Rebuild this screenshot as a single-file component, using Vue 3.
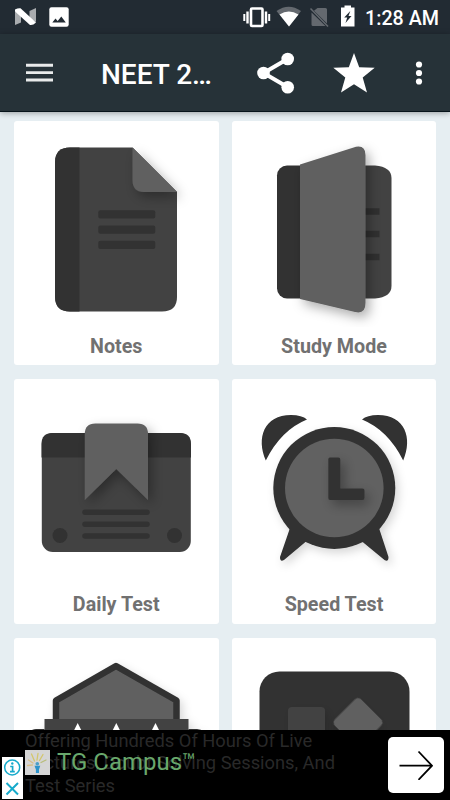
<script setup>
const tiles = [
  { id: 'notes', label: 'Notes', viewBox: '14 121 204 206' },
  { id: 'study', label: 'Study Mode', viewBox: '232 121 204 206' },
  { id: 'daily', label: 'Daily Test', viewBox: '14 379 204 206' },
  { id: 'speed', label: 'Speed Test', viewBox: '232 379 204 206' },
  { id: 'college', label: '', viewBox: '14 638 204 206' },
  { id: 'apps', label: '', viewBox: '232 638 204 206' }
]
</script>

<template>
  <div class="screen">
    <div class="status-bar">
      <div class="status-left">
        <svg class="icon-n" width="22" height="18" viewBox="0 0 22 18">
          <path d="M0 3.5L6 6v8.500L0 17z" fill="#a9acaf" />
          <path d="M21 0v14l-6.500-3V3z" fill="#a9acaf" />
          <path d="M0 1.500Q3 0 5.500 0.300L21 14.500Q18 17.500 15 17L0 3.500z" fill="#fff" />
        </svg>
        <svg class="icon-photo" width="20" height="20" viewBox="0 0 20 20">
          <rect x="0.300" y="0.300" width="19.400" height="19.400" rx="2.200" fill="#fff" />
          <path d="M3.300 15.500L6.500 11.500L8.700 14L12.300 9.500L16.800 15.500z" fill="#222b33" />
        </svg>
      </div>
      <div class="status-right">
        <svg width="174" height="34" viewBox="240 0 174 34" class="status-icons">
          <rect x="251" y="8.500" width="11.500" height="17.500" rx="1" fill="none" stroke="#fff" stroke-width="2.600" />
          <path d="M247.500 11.500v12M266 11.500v12" stroke="#fff" stroke-width="2.400" />
          <path d="M244.300 14v7M269.200 14v7" stroke="#fff" stroke-width="2" />
          <path d="M276.500 11Q288.800 2.500 301 11L289 26.500z" fill="#64696f" />
          <path d="M279.500 14.500Q288.800 8.500 298.500 14.500L289 26.500z" fill="#fff" />
          <path d="M317.500 8H325.500Q327 8 327 9.500V23.500L314 10.700zM311.500 12.500L325.500 26H313Q311.500 26 311.500 24.500z" fill="#64696f" />
          <path d="M310.500 8.500L328 26.500" stroke="#64696f" stroke-width="1.500" />
          <path d="M341 7.500H344.500V5.500H351V7.500H354.500V26.500H341z" fill="#fff" />
          <path d="M350.300 11L344.200 17.500H347.200L345.500 23L351.500 16H348.500z" fill="#222b33" />
        </svg>
        <span class="clock">1:28 AM</span>
      </div>
    </div>

    <header class="toolbar">
      <button class="tool menu" aria-label="Menu">
        <svg width="27" height="20" viewBox="0 0 27 20">
          <path d="M0 2.200h27M0 9.600h27M0 17h27" stroke="#e9ebeb" stroke-width="2.900" />
        </svg>
      </button>
      <h1 class="title">NEET 2…</h1>
      <button class="tool share" aria-label="Share">
        <svg width="38" height="42" viewBox="257 52 38 42">
          <path d="M287.500 59L263.500 73L287.500 87" fill="none" stroke="#fff" stroke-width="4" />
          <circle cx="287.700" cy="59" r="6.300" fill="#fff" />
          <circle cx="263.500" cy="73" r="6.300" fill="#fff" />
          <circle cx="287.700" cy="87.200" r="6.300" fill="#fff" />
        </svg>
      </button>
      <button class="tool star" aria-label="Favourite">
        <svg width="42" height="40" viewBox="333 52 42 40">
          <path d="M354 52L359.200 66.200L374.700 66.700L362.700 76.500L367 91.500L354 83.300L341 91.500L345.300 76.500L333.300 66.700L348.800 66.200z" fill="#fff" />
        </svg>
      </button>
      <button class="tool more" aria-label="More">
        <svg width="8" height="26" viewBox="0 0 8 26">
          <circle v-for="y in [4.5, 13, 21.5]" :key="y" cx="4" :cy="y" r="3.100" fill="#fff" />
        </svg>
      </button>
    </header>

    <main class="grid">
      <section v-for="tile in tiles" :key="tile.id" class="card">
        <svg class="art" :viewBox="tile.viewBox">
          <defs>
            <filter :id="'shadow-' + tile.id" x="-80%" y="-80%" width="260%" height="260%">
              <feDropShadow dx="4" dy="5" stdDeviation="6" flood-color="#000" flood-opacity="0.32" />
            </filter>
            <filter :id="'soft-' + tile.id" x="-30%" y="-30%" width="170%" height="170%">
              <feDropShadow dx="3" dy="4" stdDeviation="5" flood-color="#000" flood-opacity="0.16" />
            </filter>
          </defs>

          <g v-if="tile.id === 'notes'">
            <clipPath id="page">
              <path d="M70 147.500H132.500L177 192V297Q177 311.500 162 311.500H70Q55 311.500 55 296.500V162.500Q55 147.500 70 147.500z" />
            </clipPath>
            <path d="M132.500 147.500L177 192H144Q132.500 192 132.500 180z" fill="#616161" filter="url(#shadow-notes)" />
            <g clip-path="url(#page)">
              <rect x="55" y="147" width="123" height="165" fill="#424242" />
              <rect x="55" y="147" width="24.500" height="165" fill="#323232" />
              <path d="M132.500 147.500L177 192H144Q132.500 192 132.500 180z" fill="#616161" filter="url(#shadow-notes)" />
            </g>
            <rect v-for="y in [210.3, 225.5, 240.7]" :key="y" x="98.300" :y="y" width="57" height="8.300" rx="2" fill="#323232" />
          </g>

          <g v-else-if="tile.id === 'study'">
            <rect x="277" y="165.500" width="40" height="133" rx="10" fill="#323232" />
            <path d="M300 165.500H375Q391.500 167 391.500 178V286Q391.500 297 375 298.500H300z" fill="#424242" />
            <path v-for="y in [211.5, 234, 257]" :key="y" :d="`M340 ${y}H379.500`" stroke="#303030" stroke-width="6.500" />
            <path d="M300 164.500L356 146.700Q365.500 145 365.500 155V303Q365.500 314.500 355 312L300 299z" fill="#616161" filter="url(#shadow-study)" />
          </g>

          <g v-else-if="tile.id === 'daily'">
            <rect x="41.800" y="433" width="149" height="119" rx="11" fill="#424242" />
            <path d="M41.500 457.500V444Q41.500 433 52.500 433H180Q191 433 191 444V457.500z" fill="#323232" />
            <path d="M84.800 500V434Q84.800 423.500 95.300 423.500H137.500Q148 423.500 148 434V500L116.300 469z" fill="#616161" filter="url(#shadow-daily)" />
            <path v-for="y in [512.3, 524.3, 536]" :key="y" :d="`M85 ${y}H147`" stroke="#323232" stroke-width="5.500" stroke-linecap="round" />
            <circle cx="60" cy="535.500" r="7.500" fill="#323232" />
            <circle cx="174.500" cy="535.500" r="7.500" fill="#323232" />
          </g>

          <g v-else-if="tile.id === 'speed'">
            <g fill="#323232">
              <path d="M265.800 460.500C256 438 264 415 291 415Q302 415 307 419.500Q281 430 265.800 460.500z" />
              <path d="M403.200 460.500C413 438 405 415 378 415Q367 415 362 419.500Q388 430 403.200 460.500z" />
              <g filter="url(#soft-speed)">
                <circle cx="334.300" cy="488" r="61" />
                <path d="M290 528L280 557Q280 562.500 284 560L309 539zM379 528L388.500 557Q388.500 562.500 384.500 560L359 539z" />
              </g>
            </g>
            <circle cx="334.300" cy="488" r="49.300" fill="#616161" />
            <path d="M330 457.500H338.500Q340.300 457.500 340.300 459.500V488.500H362.500Q364.500 488.500 364.500 490.500V498Q364.500 500 362.500 500H330Q328.300 500 328.300 498V459.500Q328.300 457.500 330 457.500z" fill="#323232" filter="url(#shadow-speed)" />
          </g>

          <g v-else-if="tile.id === 'college'">
            <g filter="url(#soft-college)">
              <path d="M56 725V700.500L116 666L176.500 700.500V725z" fill="#616161" stroke="#323232" stroke-width="6.500" stroke-linejoin="round" />
              <path d="M44.500 719H188.500V745H44.500z" fill="#424242" />
              <path d="M30 732Q32 729 36 729H44.500V732zM188.500 729H197Q201 729 204 732H188.500z" fill="#323232" />
            </g>
            <path v-for="x in [77.7, 116.3, 155.5]" :key="x" :d="`M${x} 723L${x + 4} 731H${x - 4}z`" fill="#fff" />
          </g>

          <g v-else>
            <rect x="259.500" y="671.500" width="150" height="150" rx="20" fill="#323232" />
            <rect x="288" y="707" width="37" height="37" rx="4" fill="#424242" filter="url(#soft-apps)" />
            <rect x="339.500" y="704" width="37" height="37" rx="4.500" transform="rotate(45 358 722.500)" fill="#616161" filter="url(#soft-apps)" />
          </g>
        </svg>
        <div class="label">{{ tile.label }}</div>
      </section>
    </main>

    <footer class="ad">
      <p class="ad-text">
        Offering Hundreds Of Hours Of Live<br />
        Lectures, Doubt Solving Sessions, And<br />
        Test Series
      </p>
      <div class="ad-brand">
        <svg width="25" height="25" viewBox="0 0 25 25">
          <rect width="25" height="25" fill="#d5d5d5" />
          <g fill="none" stroke-width="1.300" stroke-linecap="round">
            <path d="M9.500 11L6.500 4M12 10L13 3.500M14.500 10.500L18 4.500" stroke="#d3c66c" />
            <path d="M8 13L3.500 10M7.500 15L2.500 15.500" stroke="#d8bd85" />
            <path d="M16 12.500L21 10" stroke="#b9bd79" />
          </g>
          <circle cx="12.300" cy="13.700" r="1.800" fill="#4b9fc8" />
          <path d="M9.500 15.800H15.300L14 19.500V23H10.900V19.500z" fill="#2d93cb" />
        </svg>
        <span class="brand-name">TG Campus<span class="tm">™</span></span>
      </div>
      <div class="ad-choices">
        <svg width="21" height="42" viewBox="0 0 21 42">
          <circle cx="10.200" cy="10.500" r="7.500" fill="none" stroke="#16aacb" stroke-width="1.500" />
          <path d="M8.200 9.500H10.600V14.700M8 14.700H12.800" fill="none" stroke="#16aacb" stroke-width="1.700" />
          <circle cx="10.300" cy="6.500" r="1.200" fill="#16aacb" />
          <path d="M4.500 26L16 37.500M16 26L4.500 37.500" stroke="#16aacb" stroke-width="2" />
        </svg>
      </div>
      <button class="ad-go" aria-label="Open">
        <svg width="34" height="30" viewBox="397 749 34 30">
          <path d="M397.500 764.700H430M416.500 750.500L430 764.700L416.500 778.800" fill="none" stroke="#000" stroke-width="1.800" />
        </svg>
      </button>
    </footer>
  </div>
</template>

<style>
body {
  margin: 0;
}
</style>

<style scoped>
.screen {
  position: relative;
  width: 450px;
  height: 800px;
  overflow: hidden;
  display: flex;
  flex-direction: column;
  background: #e6eef2;
  font-family: Roboto, sans-serif;
}
.status-bar {
  flex: none;
  display: flex;
  justify-content: space-between;
  height: 34px;
  background: #222b33;
}
.status-left {
  display: flex;
  gap: 12px;
  padding: 7px 0 0 15px;
}
.icon-n {
  margin-top: 1px;
}
.status-right {
  display: flex;
  width: 210px;
}
.status-icons {
  flex: none;
  width: 174px;
  margin-right: -49px;
}
.clock {
  color: #fff;
  font-size: 19.700px;
  line-height: 37px;
  font-weight: 500;
  white-space: nowrap;
}
.toolbar {
  position: relative;
  flex: none;
  display: flex;
  align-items: center;
  box-sizing: border-box;
  height: 78px;
  background: #263238;
  border-bottom: 1px solid #07141b;
  box-shadow: 0 1px 6px rgba(0, 0, 0, 0.35);
}
.tool {
  display: flex;
  padding: 0;
  border: none;
  background: none;
  cursor: pointer;
}
.menu {
  margin-left: 26px;
}
.title {
  width: 120px;
  margin: 3px 0 0 48px;
  color: #fff;
  font-size: 28px;
  font-weight: 500;
  white-space: nowrap;
}
.share {
  margin-left: 36px;
}
.star {
  margin-left: 38px;
}
.more {
  margin-left: 40px;
}
.grid {
  display: grid;
  grid-template-columns: 204.500px 204px;
  grid-template-rows: 244px 245px 245px;
  gap: 14px 13.500px;
  padding: 9px 14px 0;
}
.card {
  display: flex;
  flex-direction: column;
  background: #fff;
  border-radius: 3px;
  overflow: hidden;
}
.art {
  display: block;
  flex: none;
  width: 204px;
  height: 206px;
}
.label {
  margin-top: 6px;
  color: #717171;
  font-size: 19.700px;
  line-height: 27px;
  font-weight: 700;
  text-align: center;
}
.ad {
  position: absolute;
  left: 0;
  bottom: 0;
  width: 450px;
  height: 70px;
  background: #000;
}
.ad-text {
  margin: 0 0 0 25px;
  color: #292929;
  font-size: 18.300px;
  line-height: 22.400px;
  white-space: nowrap;
}
.ad-brand {
  position: absolute;
  left: 25px;
  top: 20px;
  display: flex;
  align-items: center;
  gap: 7px;
}
.brand-name {
  color: #69a86c;
  font-size: 24px;
  line-height: 25px;
}
.tm {
  font-size: 22px;
  line-height: 1;
  vertical-align: 1px;
}
.ad-choices {
  position: absolute;
  left: 2px;
  bottom: 1px;
  width: 21px;
  height: 42px;
  background: #fff;
}
.ad-go {
  position: absolute;
  right: 6px;
  top: 7px;
  display: flex;
  align-items: center;
  justify-content: center;
  width: 56px;
  height: 56px;
  padding: 0;
  border: none;
  border-radius: 5px;
  background: #fff;
}
</style>
